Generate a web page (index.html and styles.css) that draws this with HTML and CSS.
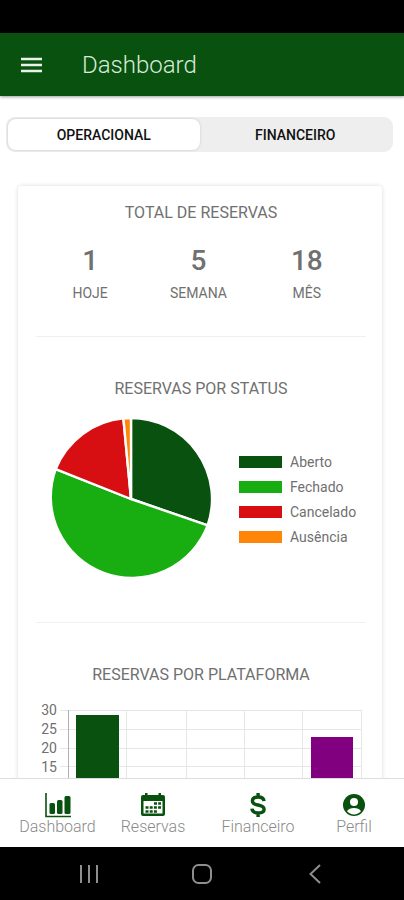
FILE: index.html
```html
<!DOCTYPE html>
<html lang="pt-BR">
<head>
    <meta charset="utf-8">
    <meta name="viewport" content="width=device-width, initial-scale=1">
    <title>Dashboard</title>
    <link rel="stylesheet" href="styles.css">
</head>
<body>
    <div class="status-bar"></div>
    <header class="header">
        <button class="menu-button" type="button" aria-label="Menu">
            <svg width="22" height="16" viewBox="0 0 22 16">
                <path d="M0 2h21M0 8h21M0 14h21" stroke="#e8f3e8" stroke-width="2.6"/>
            </svg>
        </button>
        <h1 class="header-title">Dashboard</h1>
    </header>

    <main class="content">
        <div class="segment">
            <button class="segment-button active" type="button">OPERACIONAL</button>
            <button class="segment-button" type="button">FINANCEIRO</button>
        </div>

        <div class="card">
            <section class="section totals">
                <h2 class="section-title">TOTAL DE RESERVAS</h2>
                <div class="numbers">
                    <div class="number"><strong>1</strong><span>HOJE</span></div>
                    <div class="number"><strong>5</strong><span>SEMANA</span></div>
                    <div class="number"><strong>18</strong><span>MÊS</span></div>
                </div>
            </section>

            <section class="section status">
                <h2 class="section-title">RESERVAS POR STATUS</h2>
                <div class="pie-row">
                    <svg class="pie" width="162" height="162" viewBox="-81 -81 162 162">
                        <g stroke="#fff" stroke-width="2.4" stroke-linejoin="round">
                            <path fill="#08510f" d="M0 0V-81A81 81 0 0 1 76.6 26.4Z"/>
                            <path fill="#18ad10" d="M0 0L76.6 26.4A81 81 0 0 1 -75.3 -29.9Z"/>
                            <path fill="#d80f12" d="M0 0L-75.3 -29.9A81 81 0 0 1 -7.6 -80.6Z"/>
                            <path fill="#ff8508" d="M0 0L-7.6 -80.6A81 81 0 0 1 0 -81Z"/>
                        </g>
                    </svg>
                    <ul class="legend">
                        <li><i class="swatch open"></i>Aberto</li>
                        <li><i class="swatch closed"></i>Fechado</li>
                        <li><i class="swatch canceled"></i>Cancelado</li>
                        <li><i class="swatch absent"></i>Ausência</li>
                    </ul>
                </div>
            </section>

            <section class="section platform">
                <h2 class="section-title">RESERVAS POR PLATAFORMA</h2>
                <svg class="bars" viewBox="0 0 330 140">
                    <path d="M24 10.500H326M24 29.500H326M24 48.500H326M24 66.500H326M24 85.500H326M24 104.500H326M24 123.500H326M90.500 10V132M150.500 10V132M208.500 10V132M266.500 10V132M325.500 10V132" stroke="#e6e6e6" fill="none"/>
                    <path d="M32.500 10V132" stroke="#b0b0b0"/>
                    <rect x="40" y="15" width="43" height="109" fill="#08510f"/>
                    <rect x="275" y="37" width="42" height="87" fill="#800080"/>
                    <g class="ticks">
                        <text x="21" y="15">30</text>
                        <text x="21" y="34">25</text>
                        <text x="21" y="53">20</text>
                        <text x="21" y="72">15</text>
                    </g>
                </svg>
            </section>
        </div>
    </main>

    <nav class="tabs">
        <a class="tab" href="#dashboard">
            <svg width="26" height="26" viewBox="0 0 26 26" fill="#08510f">
                <path d="M1 1v23.500h25" fill="none" stroke="#08510f" stroke-width="1.600"/>
                <rect x="4.500" y="11" width="5.500" height="11" rx="1.500"/>
                <rect x="12" y="8" width="5.500" height="14" rx="1.500"/>
                <rect x="19.500" y="4" width="6" height="18" rx="1.500"/>
            </svg>
            Dashboard
        </a>
        <a class="tab" href="#reservas">
            <svg width="26" height="26" viewBox="0 0 26 26">
                <path fill="#08510f" fill-rule="evenodd" d="M5 1h2.500v2h11V1H21v2h2a2 2 0 0 1 2 2v17a2 2 0 0 1-2 2H3a2 2 0 0 1-2-2V5a2 2 0 0 1 2-2h2zM3.500 9v12.500h19V9z"/>
                <path d="M14 11.500h7M5.500 15.500h15.500M5.500 19.500h11.500" stroke="#08510f" stroke-width="2.600" stroke-dasharray="3 1.200"/>
            </svg>
            Reservas
        </a>
        <a class="tab" href="#financeiro">
            <svg width="26" height="26" viewBox="0 0 26 26">
                <path fill="none" stroke="#08510f" stroke-width="3.4" d="M19 9.200C18.800 6.400 16.500 5 13.200 5C9.500 5 7.400 6.500 7.400 8.900C7.400 11.300 9.200 12.200 13.100 13C17.100 13.800 19.100 15 19.100 17.300C19.100 19.800 16.800 21 13.200 21C9.500 21 7.200 19.600 6.900 16.700M13.100 1v4M13.100 21v4"/>
            </svg>
            Financeiro
        </a>
        <a class="tab" href="#perfil">
            <svg width="26" height="26" viewBox="0 0 26 26">
                <circle cx="13" cy="13" r="11" fill="#08510f"/>
                <circle cx="13" cy="10" r="4" fill="#fff"/>
                <path fill="#fff" d="M6 19.300C7.200 16.800 10 16 13 16s5.800.8 7 3.300c-1.700 2-4.200 3.200-7 3.200s-5.300-1.200-7-3.200z"/>
            </svg>
            Perfil
        </a>
    </nav>

    <div class="system-bar">
        <button type="button" aria-label="Recentes">
            <svg width="20" height="20" viewBox="0 0 20 20"><path d="M2 1v18M10 1v18M18 1v18"/></svg>
        </button>
        <button type="button" aria-label="Início">
            <svg width="20" height="20" viewBox="0 0 20 20"><rect x="1" y="1" width="18" height="18" rx="5.500"/></svg>
        </button>
        <button type="button" aria-label="Voltar">
            <svg width="20" height="20" viewBox="0 0 20 20"><path d="M15 1L5.500 10L15 19"/></svg>
        </button>
    </div>
</body>
</html>
```

FILE: styles.css
```css
* {
    box-sizing: border-box;
}
body {
    margin: 0;
    height: 100vh;
    display: flex;
    flex-direction: column;
    overflow: hidden;
    background-color: #fff;
    color: #707070;
    font-family: Roboto, "Liberation Sans", sans-serif;
}
button {
    border: none;
    padding: 0;
    background: none;
    font-family: inherit;
    cursor: pointer;
}
svg {
    display: block;
}
.status-bar {
    flex: none;
    height: 33px;
    background-color: #000;
}
.header {
    flex: none;
    display: flex;
    align-items: center;
    gap: 39px;
    height: 63px;
    padding: 0 21px;
    background-color: #08510f;
    box-shadow: 0 1px 3px rgba(0, 0, 0, 0.4);
}
.header-title {
    margin: 0;
    color: #d7ead7;
    font-size: 24px;
    font-weight: 300;
}
.content {
    flex: 1;
    min-height: 0;
    overflow: hidden;
    padding: 21px 0 0;
}
.segment {
    display: flex;
    height: 35px;
    margin: 0 11px 0 6px;
    padding: 2px;
    border-radius: 9px;
    background-color: #eee;
}
.segment-button {
    flex: 1;
    border-radius: 8px;
    color: #111;
    font-size: 14px;
    font-weight: 500;
}
.segment-button.active {
    background-color: #fff;
    box-shadow: 0 0 3px rgba(0, 0, 0, 0.15);
}
.card {
    margin: 34px 22px 0 18px;
    padding: 0 16px 20px 18px;
    border-radius: 4px;
    box-shadow: 0 0 4px rgba(0, 0, 0, 0.16);
}
.section {
    border-bottom: 1px solid #f0f0f0;
}
.section:last-child {
    border-bottom: none;
}
.section-title {
    margin: 0;
    font-size: 16px;
    font-weight: 400;
    line-height: 20px;
    text-align: center;
}
.totals {
    padding: 17px 0 34px;
}
.status,
.platform {
    padding: 42px 0;
}
.numbers {
    display: grid;
    grid-template-columns: repeat(3, 1fr);
    margin-top: 22px;
    padding-right: 5px;
}
.number {
    display: flex;
    flex-direction: column;
    align-items: center;
    gap: 7px;
}
.number strong {
    font-size: 28px;
    font-weight: 500;
    line-height: 32px;
}
.number span {
    font-size: 14px;
    line-height: 18px;
}
.pie-row {
    display: flex;
    align-items: center;
    gap: 27px;
    padding: 19px 0 0 14px;
}
.pie {
    flex: none;
}
.legend {
    display: flex;
    flex-direction: column;
    gap: 7px;
    margin: 0;
    padding: 0;
    list-style: none;
    font-size: 14px;
    line-height: 18px;
}
.legend li {
    display: flex;
    align-items: center;
    gap: 8px;
}
.swatch {
    width: 43px;
    height: 12px;
}
.open {
    background-color: #08510f;
}
.closed {
    background-color: #18ad10;
}
.canceled {
    background-color: #d80f12;
}
.absent {
    background-color: #ff8508;
}
.bars {
    width: 100%;
    margin-top: 15px;
}
.ticks text {
    fill: #707070;
    font-size: 14px;
    text-anchor: end;
}
.tabs {
    flex: none;
    display: grid;
    grid-template-columns: 95fr 96fr 114fr 78fr;
    padding: 13px 11px 11px 10px;
    border-top: 1px solid #ddd;
    background-color: #fff;
}
.tab {
    display: flex;
    flex-direction: column;
    align-items: center;
    color: #8a8a8a;
    font-size: 16px;
    font-weight: 300;
    line-height: 18px;
    text-decoration: none;
}
.system-bar {
    flex: none;
    display: flex;
    justify-content: center;
    gap: 93px;
    height: 53px;
    background-color: #000;
}
.system-bar path,
.system-bar rect {
    fill: none;
    stroke: #8e8e8e;
    stroke-width: 2;
}
```
